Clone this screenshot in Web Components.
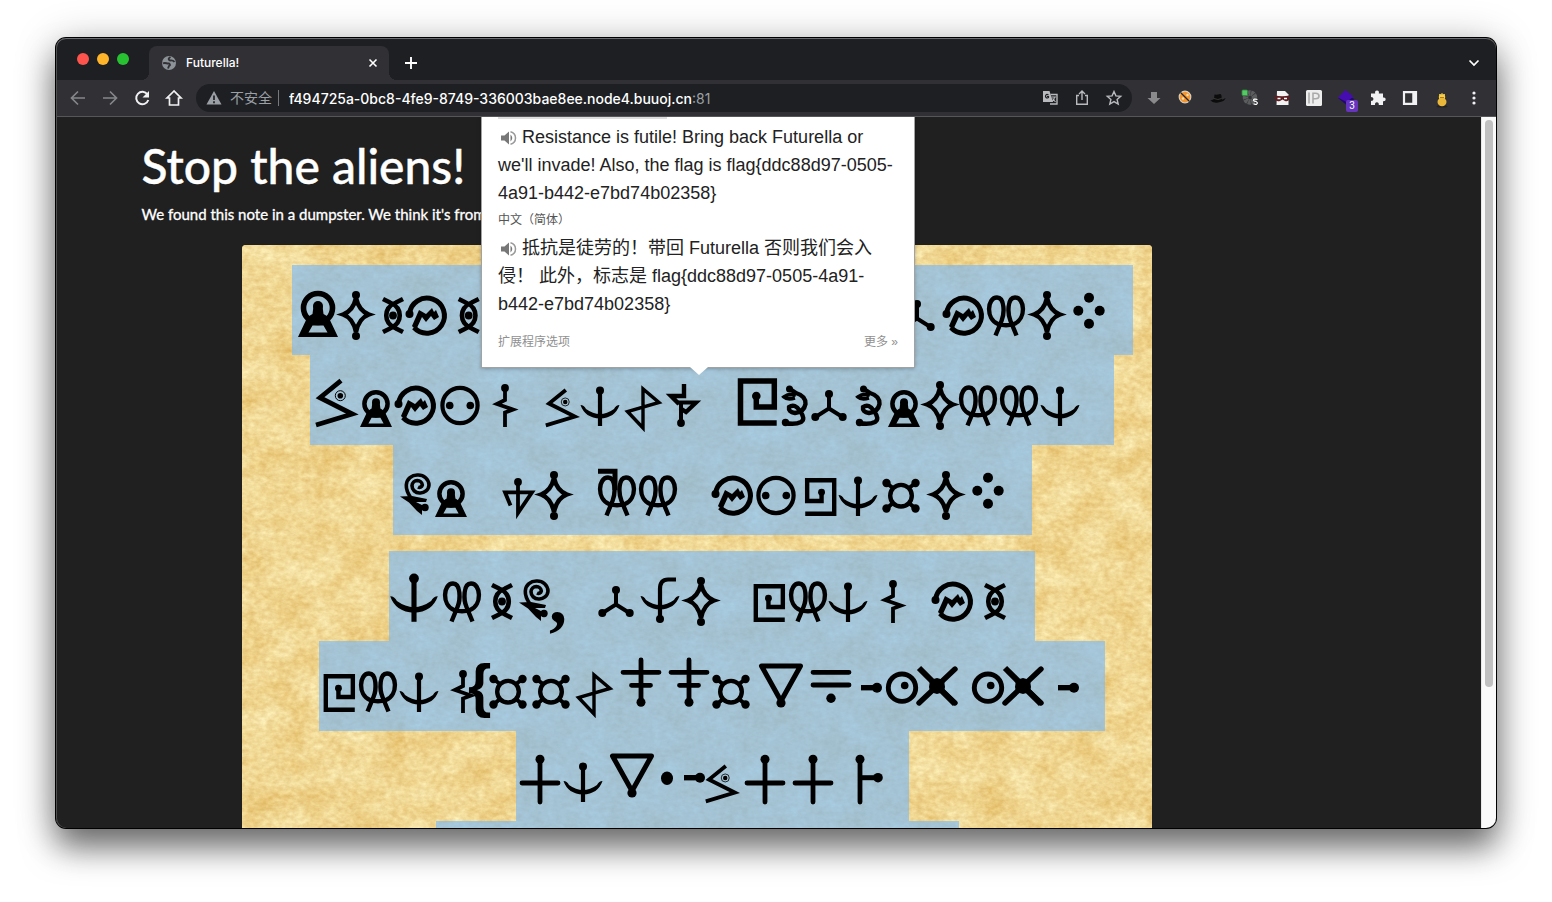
<!DOCTYPE html>
<html lang="en">
<head>
<meta charset="utf-8">
<title>Futurella!</title>
<style>
html, body { margin: 0; height: 100%; background: #fff; overflow: hidden; }
body { font-family: Inter, "Liberation Sans", "Noto Sans CJK SC", sans-serif; }
</style>
</head>
<body>
<browser-window>
  <tab-strip slot="tabs"></tab-strip>
  <tool-bar slot="toolbar"></tool-bar>
  <note-page>
    <translate-bubble></translate-bubble>
  </note-page>
</browser-window>

<script>
function define(name, html, setup) {
  const template = document.createElement('template');
  template.innerHTML = html;
  customElements.define(name, class extends HTMLElement {
    constructor() {
      super();
      this.attachShadow({ mode: 'open' }).append(template.content.cloneNode(true));
    }
    connectedCallback() { if (setup) setup.call(this, this.shadowRoot); }
  });
}

/* Alien alphabet. Each symbol is drawn round x = 0, with y measured from the top of its 90px line. */
const dot = (x, y, r) => `<circle class="f" cx="${x}" cy="${y}" r="${r}"/>`;
const line = (d, w) => `<path d="${d}" stroke-width="${w}"/>`;
const fill = d => `<path class="f" fill-rule="evenodd" d="${d}"/>`;
const ALPHABET = {
  arch: `<circle cx="0" cy="43" r="14.5" stroke-width="5.600"/>` + dot(0, 41, 5) +
    fill('M-4.500 41H4.500L5.500 49L10.500 52L20 72H-20L-10.500 52L-5.500 49ZM-5.500 60.500L-9.500 67.500H9.500L5.500 60.500Z'),
  star: line('M0 33Q3 46 13 49.500Q3 53 0 67Q-3 53 -13 49.500Q-3 46 0 33Z', 4.5) +
    fill('M-17 49.500L-8 47V52ZM17 49.500L8 47V52Z') + dot(0, 30, 4) + dot(0, 71, 4),
  eye: line('M10 34L3 37.500C-10 43 -10 58 3 63.500L10 67M-10 34L-3 37.500C10 43 10 58 -3 63.500L-10 67', 4.6) + dot(0, 50.5, 3.9),
  hill: line('M-16.500 49A17.500 17.500 0 1 1 -12 62.500', 5) + dot(-16.5, 49, 4) +
    fill('M-14 61L-7 45L0 49L6 43L8 47L10 45L13 52L8 55L5 51L0 57L-4 52L-10 65Z'),
  snake: line('M6 25.700L-15 42.700L17.300 59L-19 70', 4.8) + dot(5.3, 40.7, 2.8) +
    `<circle cx="5.300" cy="40.700" r="5" stroke-width="1"/>`,
  face: `<circle cx="0" cy="50.500" r="17.600" stroke-width="4.200"/>` + dot(-10.3, 50.5, 3.8) + dot(10.3, 50.5, 3.8),
  bolt: line('M0 33V45L-8 49L8 54.500L0 57.500V72', 3.8) + dot(0, 33, 3.9),
  anchor: line('M0 35V71', 4.2) + dot(0, 35.5, 4) +
    fill('M-19.500 50Q-16 50 -14 54Q0 64 14 54Q16 50 19.500 50Q15 63 0 63.500Q-15 63 -19.500 50Z'),
  kite: line('M0 34V73L-15.500 56.500L16 47.500Z', 3.4),
  stork: line('M3 29V41H-10L-2 49', 4.4) + line('M-3 47.500H15L5 57L-1 53', 4.2) + line('M0 49V68', 4) + dot(0, 68, 3.9),
  maze: line('M19.700 68H-16.500V26H17.300V52H-.700V41', 5.5) + dot(-.7, 41, 4.3),
  curl: line('M-5 34L1 38Q11 41 10.500 49Q9 57 0 58Q-7 57 -6 52Q0 48 5 56Q11 64 6 67Q0 70 -10 68', 4.4) +
    line('M1 40Q-6 38 -11 42Q-8 45 0 43', 3.8) + dot(-5.5, 34, 3.5) + dot(-9.5, 67.5, 3.7),
  tripod: line('M0 39V53.500L-13.500 62M0 53.500L13.500 62', 4) + dot(0, 39, 4) + dot(-13.7, 62, 4) + dot(13.7, 62, 4),
  ribbon: line('M-10.500 70.500L-4.500 56C-1.500 49 -1 32.500 -9 32.500C-19 32.500 -20.500 54 -8 59Q0 61.500 8 59C20.500 54 19 32.500 9 32.500C1 32.500 1.500 49 4.500 56L10.500 70.500', 4.4),
  four: dot(0, 32.7, 5) + dot(-10.7, 45.7, 5) + dot(10.7, 45.7, 5) + dot(0, 58.7, 5),
  snail: line('M-6 53Q-11 46 -10.700 40A11 10.500 0 0 1 1 30A10.700 10.500 0 0 1 12 40A8.700 8.500 0 0 1 2.500 48A7.500 7.300 0 0 1 -5 40.700A5.500 5.500 0 0 1 .300 35.500A5 5 0 0 1 5.300 40A3 3 0 0 1 1 42', 3.6) +
    fill('M-17 51.500L-5 51L10 54L9 57L-1 57L5 60V70L0 66L-8 57.500Z') + dot(8, 62.5, 3.7),
  sail: line('M0 37V68L14 47.300H-13L-7.500 60.500', 3.8) + dot(0, 37, 3.9),
  hat: line('M-19 26.300H-2V45', 5),
  node: `<circle cx="0" cy="50.700" r="10.800" stroke-width="4.400"/>` + line('M-14.500 38L-8 43M14.500 38L8 43M-14.500 63.500L-8 58M14.500 63.500L8 58', 4) +
    dot(-14.5, 38, 4.2) + dot(14.5, 38, 4.2) + dot(-14.5, 63.5, 4.2) + dot(14.5, 63.5, 4.2),
  crook: line('M16 28.500H8Q0 28.500 0 38V68', 4.2) + dot(0, 68, 4) +
    fill('M-19.500 45Q-16 45 -14 49Q0 59 14 49Q16 45 19.500 45Q15 58 0 58.500Q-15 58 -19.500 45Z'),
  dagger: `<g stroke-linecap="round">${line('M0 19V61M-18 31.300H18M-9.500 44.300H9.500', 4.8)}</g>` + dot(0, 61.3, 4.5),
  vee: `<g stroke-linejoin="round">${line('M-19.500 25H19.500L0 60Z', 5)}</g>` + dot(0, 62, 4.6),
  equal: `<g stroke-linecap="round">${line('M-18 31.300H18M-18 44H18', 4.8)}</g>` + dot(0, 57.3, 4.7),
  stub: line('M0 46.700H16', 5.4) + dot(16, 46.7, 5),
  ring: `<circle cx="0" cy="46.700" r="13.700" stroke-width="4.900"/>` + dot(2.7, 44.5, 3.8),
  ex: line('M-18 27L18 63', 6) + `<g stroke-linecap="round">${line('M18 28L-18 62M0 45L18 62', 5.4)}</g>` + fill('M-7 39L0 37L7 39L8 46L7 51L0 53L-7 51L-8 46Z'),
  plus: `<g stroke-linecap="round">${line('M0 28V71M-18 52H18', 4.8)}</g>` + dot(0, 28.3, 4.5),
  bullet: `<ellipse class="f" cx="0" cy="47.300" rx="6" ry="6.700"/>`,
  post: `<g stroke-linecap="round">${line('M0 28V71', 4.8)}</g>` + line('M0 46.700H18', 5) + dot(0, 28.3, 4.5) + dot(18, 46.7, 4.8)
};

/* One entry per line of the note: its width, its left edge, and [symbol, x, scale] for each sign. */
const LINES = [
  { w: 841, left: 292, signs: [['arch',318],['star',356],['eye',393],['hill',426],['eye',468.7],['tripod',917],['hill',963],['ribbon',1006],['star',1047],['four',1089]] },
  { w: 804, left: 310, signs: [['snake',335],['arch',376,.8],['hill',415],['face',460],['bolt',505],['snake',561,.8],['anchor',600],['kite',643],['stork',681],['maze',757],['curl',795],['tripod',829],['curl',869],['arch',904,.8],['star',940],['ribbon',978],['ribbon',1019],['anchor',1060]] },
  { w: 639, left: 393, signs: [['snail',417],['arch',451,.8],['sail',518],['star',554],['hat',617],['ribbon',617],['ribbon',658],['hill',732],['face',776],['maze',821,-.8],['anchor',858],['node',901],['star',946],['four',988]] },
  { w: 646, left: 389, gap: true, signs: [['anchor',414,1.22],['ribbon',462],['eye',502],['snail',536],['text:,',549],['tripod',616],['crook',660],['star',701],['maze',769,.8],['ribbon',808],['anchor',848],['bolt',893],['hill',952],['eye',995]] },
  { w: 786, left: 319, signs: [['maze',339,.8],['ribbon',378],['anchor',419],['bolt',463],['text:{',468],['node',508],['node',551],['kite',594],['dagger',641],['dagger',689],['node',731],['vee',781],['equal',831],['stub',861],['ring',902],['ex',937],['ring',988],['ex',1023],['stub',1058]] },
  { w: 393, left: 516, signs: [['plus',540],['anchor',583],['vee',632],['bullet',667],['stub',684],['snake',721,.8],['plus',765],['plus',813],['post',860]] },
  { w: 523, left: 436, last: true, signs: [] }
];

define('note-line', `
<style>
:host { display: block; flex: none; background: rgba(123,184,247,.65); }
svg { display: block; width: 100%; height: 90px; overflow: visible; fill: none; stroke: #000; stroke-linejoin: miter; }
.f { fill: #000; stroke: none; }
text { fill: #000; stroke: none; }
.comma { font: bold 72px "Liberation Serif", serif; }
.brace { font: bold 60px "Liberation Sans", sans-serif; }
</style>
<svg></svg>`, function (root) {
  const { w, left, signs } = LINES[+this.getAttribute('index')];
  this.style.width = w + 'px';
  const svg = root.querySelector('svg');
  svg.setAttribute('viewBox', `0 0 ${w} 90`);
  svg.innerHTML = signs.map(([name, x, s = 1]) => {
    const px = x - left;
    if (name.startsWith('text:')) {
      const ch = name.slice(5);
      return ch === ',' ? `<text class="comma" x="${px}" y="72">,</text>` : `<text class="brace" x="${px}" y="65">{</text>`;
    }
    const k = Math.abs(s);
    return `<g transform="translate(${px} ${72 - 72 * k}) scale(${s} ${k})">${ALPHABET[name]}</g>`;
  }).join('');
});

define('paper-note', `
<style>
:host { display: block; position: relative; overflow: hidden; border-radius: 4px; background: #f0d58d; height: 720px; }
.grain { position: absolute; inset: 0; width: 100%; height: 100%; }
.lines { position: relative; display: flex; flex-direction: column; align-items: center; padding: 20px 0 0 31px; }
.gap { margin-top: 16px; }
.last { margin-right: 30px; }
</style>
<svg class="grain" aria-hidden="true">
  <filter id="blotch" x="0" y="0" width="100%" height="100%" color-interpolation-filters="sRGB">
    <feTurbulence type="fractalNoise" baseFrequency=".03 .035" numOctaves="3" seed="8"/>
    <feColorMatrix values=".08 0 0 0 .900  .18 0 0 0 .750  .30 0 0 0 .420  0 0 0 0 1" result="a"/>
    <feTurbulence type="fractalNoise" baseFrequency=".16 .24" numOctaves="3" seed="3"/>
    <feColorMatrix values=".5 0 0 0 .25  .8 0 0 0 .1  1 0 0 0 0  0 0 0 0 1" result="b"/>
    <feComposite in="a" in2="b" operator="arithmetic" k1="0" k2="1" k3=".22" k4="-.11"/>
    <feColorMatrix values="1 0 0 0 0  0 1 0 0 0  0 0 1 0 0  0 0 0 0 1"/>
  </filter>
  <rect width="100%" height="100%" filter="url(#blotch)"/>
</svg>
<div class="lines"></div>`, function (root) {
  const box = root.querySelector('.lines');
  LINES.forEach((l, i) => {
    const el = document.createElement('note-line');
    el.setAttribute('index', i);
    if (l.gap) el.className = 'gap';
    if (l.last) el.className = 'last';
    box.append(el);
  });
});

define('translate-bubble', `
<style>
:host { display: block; position: absolute; left: 425px; top: -1px; width: 432px; height: 250px; background: #fff; border: 1px solid #a2a2a2; box-shadow: 0 1px 4px rgba(0,0,0,.25); color: #222; font: 18px/28px "Liberation Sans", "Noto Sans CJK SC", sans-serif; }
.body { padding: 0 16px; }
.edge { width: 169px; height: 2px; background: #ddd; margin-bottom: 4px; }
p { margin: 0; }
.lang { font-size: 12px; line-height: 27px; color: #555; }
button { display: inline-block; width: 20px; height: 16px; padding: 0; margin: 0 4px 0 0; border: 0; background: none; vertical-align: -3px; }
button svg { display: block; width: 20px; height: 16px; fill: #777; }
footer { display: flex; justify-content: space-between; font-size: 12px; line-height: 18px; margin-top: 15px; }
a { color: #909090; text-decoration: none; }
.tip { position: absolute; left: 208px; top: 250px; width: 18px; height: 9px; }
</style>
<div class="body">
  <div class="edge"></div>
  <p><button aria-label="Listen"><svg viewBox="0 0 20 16"><path d="M3 5.500h3.500L11 1.500v13L6.500 10.500H3z"/><path d="M12.500 4.500q3.500 3.500 0 7z"/><path d="M12.500 1.800Q17.500 3 17.500 8t-5 6.200" fill="none" stroke="#999" stroke-width="1.500"/></svg></button>Resistance is futile! Bring back Futurella or we'll invade! Also, the flag is flag{ddc88d97-0505-4a91-b442-e7bd74b02358}</p>
  <p class="lang" lang="zh">中文（简体）</p>
  <p lang="zh"><button aria-label="Listen"><svg viewBox="0 0 20 16"><path d="M3 5.500h3.500L11 1.500v13L6.500 10.500H3z"/><path d="M12.500 4.500q3.500 3.500 0 7z"/><path d="M12.500 1.800Q17.500 3 17.500 8t-5 6.200" fill="none" stroke="#999" stroke-width="1.500"/></svg></button>抵抗是徒劳的！带回 Futurella 否则我们会入侵！ 此外，标志是 flag{ddc88d97-0505-4a91-b442-e7bd74b02358}</p>
  <footer lang="zh"><a href="#options">扩展程序选项</a><a href="#more">更多 »</a></footer>
</div>
<svg class="tip" viewBox="0 0 18 9"><path d="M0 0L9 8L18 0" fill="#fff"/></svg>`);

define('note-page', `
<style>
:host { display: flex; flex: 1; min-height: 0; position: relative; overflow: hidden; background: #202020; color: #fff; font-family: Lato, sans-serif; }
main { flex: 1; min-width: 0; }
.container { max-width: 1254px; margin: 0 auto; padding: 0 15px; }
h1 { margin: 20px 0 9px; font-size: 48px; line-height: 58px; font-weight: 500; -webkit-text-stroke: .4px #fff; }
p { margin: 0 0 20px; font-size: 15px; line-height: 21px; font-weight: 400; -webkit-text-stroke: .3px #fff; }
paper-note { max-width: 910px; margin: 0 15px 0 100px; }
.bar { width: 15px; flex: none; background: #fafafa; border-left: 1px solid #e8e8e8; box-sizing: border-box; padding-top: 3px; }
.thumb { width: 8px; height: 567px; margin: 0 auto; border-radius: 4px; background: #c1c1c1; }
</style>
<main><div class="container">
  <h1>Stop the aliens!</h1>
  <p>We found this note in a dumpster. We think it's from</p>
  <paper-note></paper-note>
</div></main>
<div class="bar"><div class="thumb"></div></div>
<slot></slot>`);

define('tab-strip', `
<style>
:host { display: flex; height: 42px; box-sizing: border-box; padding: 8px 10px 0 21px; background: #1e1f23; color: #fff; }
.lights { display: flex; gap: 8px; padding-top: 7px; margin-right: 20px; }
.lights i { width: 12px; height: 12px; border-radius: 50%; background: #ff544d; }
.lights i:nth-child(2) { background: #ffb429; }
.lights i:nth-child(3) { background: #28c131; }
.tab { position: relative; display: flex; align-items: center; width: 240px; box-sizing: border-box; padding: 0 8px 0 12px; background: #303035; border-radius: 8px 8px 0 0; }
.tab::before, .tab::after { content: ""; position: absolute; bottom: 0; left: -8px; width: 8px; height: 8px; background: radial-gradient(circle at 0 0, transparent 8px, #303035 8px); }
.tab::after { left: auto; right: -8px; background: radial-gradient(circle at 100% 0, transparent 8px, #303035 8px); }
.title { flex: 1; margin-left: 9px; padding-bottom: 2px; font: 500 12px Inter, sans-serif; }
button { border: 0; background: none; padding: 0; width: 16px; height: 16px; display: block; color: #fff; }
svg { display: block; width: 16px; height: 16px; fill: none; stroke: currentColor; }
.new { margin: 9px 0 0 14px; }
.more { margin: 9px 4px 0 auto; }
</style>
<div class="lights"><i></i><i></i><i></i></div>
<div class="tab">
  <svg viewBox="0 0 16 16"><circle cx="8" cy="8" r="7" fill="#8b9298" stroke="none"/><path d="M2 8.500C4 7 6 9 8 8.500Q10 10 8 11L7 13.500M9.500 2Q6 4 9 5.500Q12 5 13.500 7" stroke="#303035" stroke-width="1.900"/></svg>
  <span class="title">Futurella!</span>
  <button aria-label="Close tab"><svg viewBox="0 0 16 16"><path d="M4.500 4.500l7 7M11.500 4.500l-7 7" stroke-width="1.600"/></svg></button>
</div>
<button class="new" aria-label="New tab"><svg viewBox="0 0 16 16"><path d="M8 2v12M2 8h12" stroke-width="1.900"/></svg></button>
<button class="more" aria-label="Search tabs"><svg viewBox="0 0 16 16"><path d="M3.500 5.500L8 10l4.500-4.500" stroke-width="1.700"/></svg></button>`);

define('tool-bar', `
<style>
:host { display: flex; align-items: center; gap: 8px; height: 37px; box-sizing: border-box; padding: 0 10px; background: #303035; border-bottom: 1px solid #55555a; color: #f1f1f3; }
button { border: 0; background: none; padding: 0; width: 24px; height: 24px; display: block; flex: none; color: inherit; position: relative; }
svg { display: block; width: 24px; height: 24px; fill: none; stroke: currentColor; stroke-width: 1.7; }
.off { color: #85868a; }
.solid { fill: currentColor; stroke: none; }
.omni { display: flex; align-items: center; flex: 1; min-width: 0; height: 28px; margin-left: 2px; margin-right: 2px; padding: 0 6px; border-radius: 14px; background: #1e1f23; color: #9aa0a6; font-size: 14px; box-sizing: border-box; }
.omni > svg { flex: none; }
.safe { margin-left: 4px; white-space: nowrap; line-height: 20px; padding-bottom: 2px; font-family: "Noto Sans CJK SC", sans-serif; }
.sep { width: 1px; height: 16px; background: #77787c; margin: 0 10px 0 6px; flex: none; }
input { field-sizing: content; border: 0; padding: 0; margin: 0; background: none; color: #fff; font: 500 14px Inter, sans-serif; outline: 0; }
.port { flex: 1; font: 14px Inter, sans-serif; }
.omni .act { margin-left: 8px; color: #b9babd; }
.omni .act svg { stroke-width: 1.4; }
.badge { position: absolute; left: 12px; top: 14px; width: 12px; height: 12px; border-radius: 2px; background: #6735bd; color: #fff; font: 10px/12px Roboto, sans-serif; text-align: center; }
</style>
<button class="off" aria-label="Back"><svg viewBox="0 0 24 24"><path d="M19 12H6M12 5.500L5.500 12l6.500 6.500"/></svg></button>
<button class="off" aria-label="Forward"><svg viewBox="0 0 24 24"><path d="M5 12h13M12 5.500l6.500 6.500-6.500 6.500"/></svg></button>
<button aria-label="Reload"><svg viewBox="0 0 24 24"><path d="M17.500 8.500A6.200 6.200 0 1 0 18.300 14" stroke-width="2"/><path class="solid" d="M19 5v6.500h-6.500z"/></svg></button>
<button aria-label="Home"><svg viewBox="0 0 24 24"><path d="M12 5l-7 7h2.500v7h9v-7H19z"/></svg></button>
<div class="omni">
  <svg viewBox="0 0 24 24"><path class="solid" d="M12 5l7.500 13.500h-15z"/><path d="M12 9.500v4.500M12 15.200v2" stroke="#1e1f23"/></svg>
  <span class="safe" lang="zh">不安全</span><span class="sep"></span>
  <input aria-label="Address" value="f494725a-0bc8-4fe9-8749-336003bae8ee.node4.buuoj.cn"><span class="port">:81</span>
  <button class="act" aria-label="Translate"><svg viewBox="0 0 24 24"><path d="M12.500 8.500H19V18h-7"/><path class="solid" d="M5 5h6.500l3.500 11H5z"/><path d="M10.500 9Q8 7.500 7.500 10.200Q8 13 10.500 11.500V10.500H9" stroke="#1e1f23" stroke-width="1.200"/><path d="M13.500 11h4.500M16.500 11Q16.500 14 14 15.500M14.500 12.500L17.500 16" stroke-width="1.100"/></svg></button>
  <button class="act" aria-label="Share"><svg viewBox="0 0 24 24"><path d="M9 9.500H6.700v8.800h10.600V9.500H15M12 14V5.500M9 8l3-3 3 3"/></svg></button>
  <button class="act" aria-label="Bookmark"><svg viewBox="0 0 24 24"><path d="M12 5.500l1.900 4.400 4.800.4-3.600 3.100 1.100 4.700-4.200-2.500-4.200 2.500 1.100-4.700-3.600-3.100 4.800-.4z"/></svg></button>
</div>
<button aria-label="Downloads"><svg viewBox="0 0 24 24"><path fill="#8a8a8c" stroke="none" d="M9 6h6v6h3.500L12 18 5.500 12H9z"/></svg></button>
<button aria-label="Cookie blocker"><svg viewBox="0 0 24 24"><circle cx="11" cy="11" r="5.800" fill="#f59530" stroke="#ddd0bd" stroke-width="1.200"/><circle cx="13.500" cy="9" r="1.200" fill="#ffe0a8" stroke="none"/><circle cx="9" cy="12.500" r="1.200" fill="#ffe0a8" stroke="none"/><path d="M6.500 6.500L15.500 15.500" stroke="#222" stroke-width="1.300"/></svg></button>
<button aria-label="Hat"><svg viewBox="0 0 24 24"><path d="M4 14Q7 17.500 12 16.500Q19 15.500 19.500 12Q16 14.500 15.500 12.500Q16 8 14 8Q11 9 8.500 8.500L8 13Q5 15 4 14Z" fill="#0c0c0c" stroke="none"/><path d="M8 12.500q4 2 7.500 0" stroke="#555" stroke-width=".6"/></svg></button>
<button aria-label="Settings gear"><svg viewBox="0 0 24 24"><circle cx="12" cy="11.500" r="4.500" stroke="#5b5d5e" stroke-width="5.500" stroke-dasharray="2.600 .5"/><rect x="4" y="4" width="5.500" height="5.500" rx="1" fill="#56c966" stroke="#2e8b3c" stroke-width=".8"/><path d="M19.500 13.500Q15.500 12.500 15.500 14.300Q16 15.500 18 15.500Q20.500 17 18.500 18.300Q16.500 18.500 15.500 17.800" stroke="#fff" stroke-width="1.200"/></svg></button>
<button aria-label="Masked user"><svg viewBox="0 0 24 24"><path d="M7 5h8l3.500 3.500V19h-12z" fill="#f2f2f2" stroke="none"/><path d="M5 9.500Q12 11 19.500 9.500V13Q18 16 15 15L12.500 13.500L10 15Q6 16 5 13z" fill="#5d1e22" stroke="none"/><path d="M7.500 12.500h3M14 12.500h3" stroke="#fff" stroke-width="1.500"/></svg></button>
<button aria-label="IP lookup"><svg viewBox="0 0 24 24"><rect x="4" y="4" width="16" height="16" rx="1.500" fill="#ededee" stroke="none"/><path d="M7 6.500v11M11 17.500V7.300h2.500Q17 7.300 17 10Q17 12.700 13.500 12.700H11" stroke="#aaa" stroke-width="1.600"/></svg></button>
<button aria-label="Layers"><svg viewBox="0 0 24 24"><path d="M4 12l8.500 7 8-6-8-4z" fill="#22086e" stroke="none"/><path d="M4 11.500L11.500 4l8 6.500-7 5.500z" fill="#450db0" stroke="none"/></svg><span class="badge">3</span></button>
<button aria-label="Extensions"><svg viewBox="0 0 24 24"><path class="solid" d="M5 7.500h4.200Q8.500 4.500 11 4.500T12.800 7.500H17v4Q19.700 11 19.700 13.300T17 15.300V19h-4.200Q13 16.300 10.900 16.300T9 19H5v-4Q7.500 15 7.500 13T5 11z"/></svg></button>
<button aria-label="Side panel"><svg viewBox="0 0 24 24"><path d="M6 6.200h12v11.600H6z" stroke-width="2.200"/><path d="M16 6v12" stroke-width="3.500"/></svg></button>
<button aria-label="Profile"><svg viewBox="0 0 24 24"><ellipse cx="12" cy="20.500" rx="5.500" ry="1" fill="#222" stroke="none"/><circle cx="12" cy="11" r="3.200" fill="#f6cf43" stroke="none"/><path d="M9 8.500h6M12 7v2" stroke="#ddb94a" stroke-width="1"/><ellipse cx="12" cy="16" rx="4.500" ry="4.200" fill="#e9b73a" stroke="none"/><path d="M10 11.500h4" stroke="#b87820" stroke-width="1.200"/></svg></button>
<button aria-label="Menu"><svg viewBox="0 0 24 24"><g class="solid"><circle cx="12" cy="7" r="1.600"/><circle cx="12" cy="12" r="1.600"/><circle cx="12" cy="17" r="1.600"/></g></svg></button>`);

define('browser-window', `
<style>
:host { display: flex; flex-direction: column; height: 100vh; box-sizing: border-box; padding: 38px 56px 74px; }
.frame { flex: 1; min-height: 0; display: flex; flex-direction: column; position: relative; overflow: hidden; border-radius: 10px; background: #202020; }
.shade { flex: 1; min-height: 0; display: flex; border-radius: 10px; box-shadow: 0 0 0 1px #000, 0 20px 32px rgba(0,0,0,.5), 0 4px 40px rgba(0,0,0,.25); }
.frame::after { content: ""; position: absolute; inset: 0; border-radius: 10px; box-shadow: inset 0 1px 0 #6d6d70, inset 1px 0 0 #505053; pointer-events: none; }
</style>
<div class="shade"><div class="frame"><slot name="tabs"></slot><slot name="toolbar"></slot><slot></slot></div></div>`);
</script>
</body>
</html>
